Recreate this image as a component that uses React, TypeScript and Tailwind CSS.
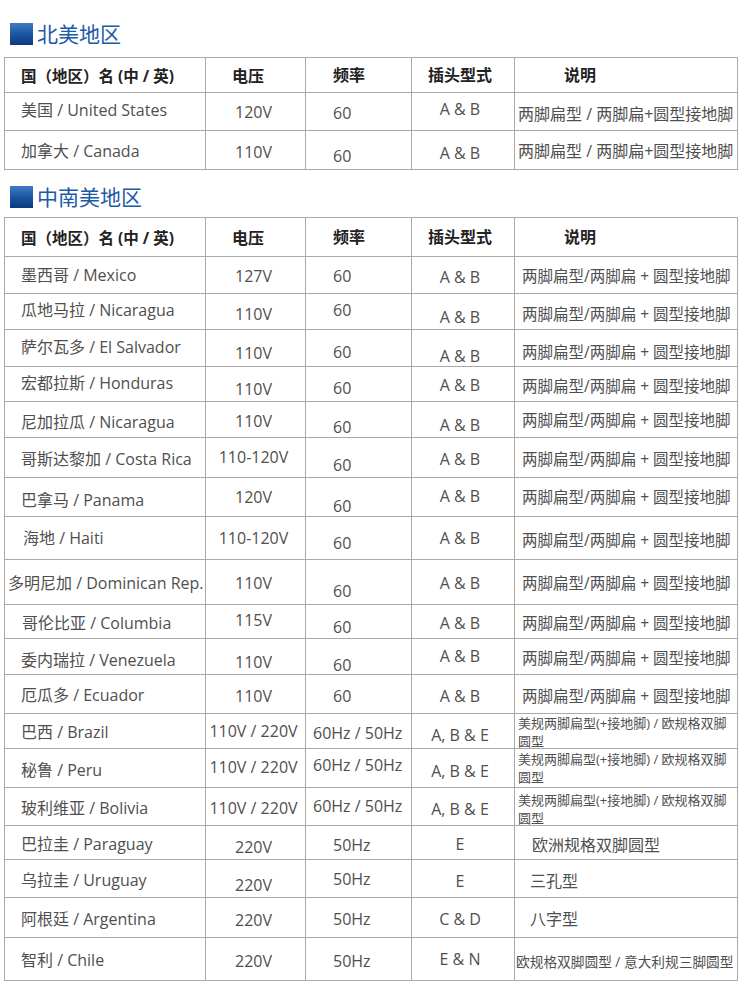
import React from "react";

type Row = {
  name: string;
  v: string;
  hz: string;
  plug: string;
  desc: string;
  h: string;
  dy: number[];
  nc?: string;
  hc?: string;
  dc?: string;
};

const SHIFT: Record<number, string> = {
  [-2]: "-translate-y-[2px]",
  [-1]: "-translate-y-[1px]",
  0: "",
  1: "translate-y-[1px]",
  2: "translate-y-[2px]",
  3: "translate-y-[3px]",
  4: "translate-y-[4px]",
  5: "translate-y-[5px]",
  6: "translate-y-[6px]",
  7: "translate-y-[7px]",
  8: "translate-y-[8px]",
  9: "translate-y-[9px]",
  10: "translate-y-[10px]",
};

const D1 = "两脚扁型 / 两脚扁+圆型接地脚";
const D2 = "两脚扁型/两脚扁 + 圆型接地脚";
const D3 = "美规两脚扁型(+接地脚) / 欧规格双脚圆型";
const SMALL = "pl-[3px] pr-[6px] text-[13px] leading-[18px]";
const LONG_HZ = "pl-[7px]";

const northAmerica: Row[] = [
  { name: "美国 / United States", v: "120V", hz: "60", plug: "A & B", desc: D1, h: "h-[38px]", dy: [-1, 1, 2, -2, 3] },
  { name: "加拿大 / Canada", v: "110V", hz: "60", plug: "A & B", desc: D1, h: "h-[39px]", dy: [2, 3, 7, 4, 2] },
];

const latinAmerica: Row[] = [
  { name: "墨西哥 / Mexico", v: "127V", hz: "60", plug: "A & B", desc: D2, h: "h-[37px]", dy: [1, 2, 2, 3, 1] },
  { name: "瓜地马拉 / Nicaragua", v: "110V", hz: "60", plug: "A & B", desc: D2, h: "h-[36px]", dy: [-1, 3, -1, 6, 3] },
  { name: "萨尔瓦多 / El Salvador", v: "110V", hz: "60", plug: "A & B", desc: D2, h: "h-[37px]", dy: [0, 6, 5, 9, 4] },
  { name: "宏都拉斯 / Honduras", v: "110V", hz: "60", plug: "A & B", desc: D2, h: "h-[35px]", dy: [0, 6, 5, 2, 2] },
  { name: "尼加拉瓜 / Nicaragua", v: "110V", hz: "60", plug: "A & B", desc: D2, h: "h-[36px]", dy: [3, 2, 8, 6, 1] },
  { name: "哥斯达黎加 / Costa Rica", v: "110-120V", hz: "60", plug: "A & B", desc: D2, h: "h-[40px]", dy: [2, 0, 8, 2, 2] },
  { name: "巴拿马 / Panama", v: "120V", hz: "60", plug: "A & B", desc: D2, h: "h-[39px]", dy: [4, 1, 10, 0, 0] },
  { name: "海地 / Haiti", v: "110-120V", hz: "60", plug: "A & B", desc: D2, h: "h-[43px]", dy: [1, 1, 6, 1, 2], nc: "pl-[18px]" },
  { name: "多明尼加 / Dominican Rep.", v: "110V", hz: "60", plug: "A & B", desc: D2, h: "h-[45px]", dy: [2, 2, 10, 2, 1], nc: "pl-[3px]" },
  { name: "哥伦比亚 / Columbia", v: "115V", hz: "60", plug: "A & B", desc: D2, h: "h-[34px]", dy: [2, -1, 6, 2, 2], nc: "pl-[17px]" },
  { name: "委内瑞拉 / Venezuela", v: "110V", hz: "60", plug: "A & B", desc: D2, h: "h-[36px]", dy: [4, 6, 9, 0, 2] },
  { name: "厄瓜多 / Ecuador", v: "110V", hz: "60", plug: "A & B", desc: D2, h: "h-[39px]", dy: [2, 3, 3, 3, 2] },
  { name: "巴西 / Brazil", v: "110V / 220V", hz: "60Hz / 50Hz", plug: "A, B & E", desc: D3, h: "h-[35px]", dy: [1, 0, 2, 4, 0], hc: LONG_HZ, dc: SMALL },
  { name: "秘鲁 / Peru", v: "110V / 220V", hz: "60Hz / 50Hz", plug: "A, B & E", desc: D3, h: "h-[39px]", dy: [3, 0, -2, 4, 0], hc: LONG_HZ, dc: SMALL },
  { name: "玻利维亚 / Bolivia", v: "110V / 220V", hz: "60Hz / 50Hz", plug: "A, B & E", desc: D3, h: "h-[38px]", dy: [2, 2, 0, 3, 2], hc: LONG_HZ, dc: SMALL },
  { name: "巴拉圭 / Paraguay", v: "220V", hz: "50Hz", plug: "E", desc: "欧洲规格双脚圆型", h: "h-[34px]", dy: [2, 5, 3, 2, 3], dc: "pl-[17px] text-[16px]" },
  { name: "乌拉圭 / Uruguay", v: "220V", hz: "50Hz", plug: "E", desc: "三孔型", h: "h-[38px]", dy: [2, 7, 1, 3, 3], dc: "pl-[15px] text-[16px]" },
  { name: "阿根廷 / Argentina", v: "220V", hz: "50Hz", plug: "C & D", desc: "八字型", h: "h-[40px]", dy: [2, 3, 2, 2, 2], dc: "pl-[15px] text-[16px]" },
  { name: "智利 / Chile", v: "220V", hz: "50Hz", plug: "E & N", desc: "欧规格双脚圆型 / 意大利规三脚圆型", h: "h-[43px]", dy: [2, 3, 3, 1, 3], dc: "pl-[1px] text-[13.7px] whitespace-nowrap" },
];

const GRID = "grid grid-cols-[201px_100px_106px_103px_223px] border-b border-[#a9a9a9]";

function Cell({ className, dy = 0, children }: { className?: string; dy?: number; children: React.ReactNode }) {
  return (
    <div className={`flex h-full items-center border-r border-[#a9a9a9] ${className ?? ""}`}>
      <span className={SHIFT[dy]}>{children}</span>
    </div>
  );
}

function Heading({ text }: { text: string }) {
  return (
    <div className="ml-[10px] flex h-[22px] items-center">
      <span className="h-[22px] w-[23px] bg-linear-to-b from-[#3f7cc4] via-[#1d56a0] to-[#0b3a80]" />
      <span className="ml-[4px] text-[21px] leading-none text-[#1b5aa6]">{text}</span>
    </div>
  );
}

function HeaderRow({ h }: { h: string }) {
  return (
    <div className={`${GRID} ${h} text-[16px] font-bold text-[#222]`}>
      <Cell className="pl-[16px] text-[15.5px]" dy={1}>国（地区）名 (中 / 英)</Cell>
      <Cell className="pl-[26px]" dy={2}>电压</Cell>
      <Cell className="pl-[27px]" dy={1}>频率</Cell>
      <Cell className="pl-[16px]" dy={1}>插头型式</Cell>
      <Cell className="pl-[49px]" dy={1}>说明</Cell>
    </div>
  );
}

function Table({ rows, headerH, descClass }: { rows: Row[]; headerH: string; descClass: string }) {
  return (
    <div className="ml-[4px] w-[734px] border-l border-t border-[#a9a9a9]">
      <HeaderRow h={headerH} />
      {rows.map((r) => (
        <div key={r.name} className={`${GRID} ${r.h} text-[16px] text-[#4f4f4f]`}>
          <Cell className={`whitespace-nowrap ${r.nc ?? "pl-[16px]"}`} dy={r.dy[0]}>{r.name}</Cell>
          <Cell className="justify-center whitespace-nowrap pr-[4px]" dy={r.dy[1]}>{r.v}</Cell>
          <Cell className={`whitespace-nowrap ${r.hc ?? "pl-[27px]"}`} dy={r.dy[2]}>{r.hz}</Cell>
          <Cell className="justify-center whitespace-nowrap pr-[6px]" dy={r.dy[3]}>{r.plug}</Cell>
          <Cell className={r.dc ?? descClass} dy={r.dy[4]}>{r.desc}</Cell>
        </div>
      ))}
    </div>
  );
}

export default function App() {
  return (
    <div className="min-h-[1003px] w-[740px] bg-white pt-[23px] font-['Open_Sans','Noto_Sans_CJK_SC',sans-serif] leading-[1.2]">
      <Heading text="北美地区" />
      <div className="mt-[12px]">
        <Table rows={northAmerica} headerH="h-[35px]" descClass="pl-[3px] text-[16px] whitespace-nowrap" />
      </div>
      <div className="mt-[16px]">
        <Heading text="中南美地区" />
      </div>
      <div className="mt-[9px]">
        <Table rows={latinAmerica} headerH="h-[39px]" descClass="pl-[7px] text-[15.5px] whitespace-nowrap" />
      </div>
    </div>
  );
}
